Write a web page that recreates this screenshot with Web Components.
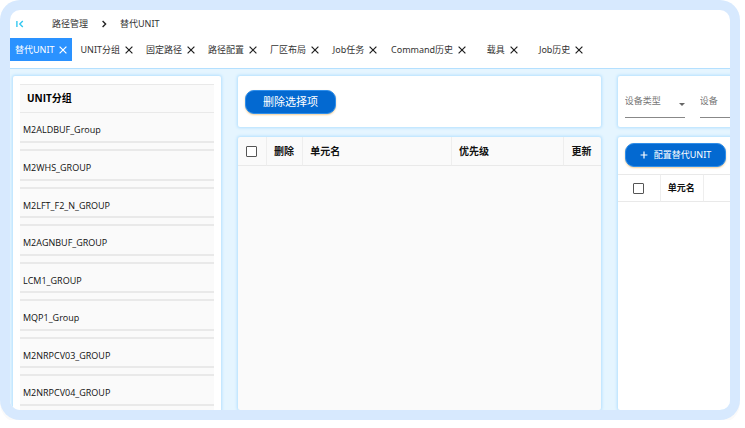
<!DOCTYPE html>
<html lang="zh-CN">
<head>
<meta charset="UTF-8">
<meta name="viewport" content="width=device-width, initial-scale=1">
<title>替代UNIT</title>
<style>
  :root {
    --blue: #0369d1;
    --tab-blue: #2a92ff;
    --glow: #b4e0ff;
    --line: #e9e9e9;
    --grey: #fafafa;
  }
  body {
    margin: 0 5px 8px 0;
    background: #fff;
    color: #333;
    font: 9px/12px "Noto Sans", "Noto Sans CJK SC", sans-serif;
  }
</style>
</head>
<body>
<unit-page></unit-page>

<script>
class CrumbBar extends HTMLElement {
  constructor() {
    super();
    this.attachShadow({ mode: "open" });
  }
  connectedCallback() {
    this.shadowRoot.innerHTML = `<style>
      :host {
        display: block;
        padding: 0 6px;
      }
      nav {
        display: flex;
        align-items: center;
        height: 28px;
      }
      a {
        color: #333;
        text-decoration: none;
      }
      button {
        display: flex;
        padding: 0;
        margin-right: 28px;
        border: 0;
        background: none;
      }
      .sep {
        margin: 0 12px;
      }
    </style>
    <nav aria-label="breadcrumb">
      <button type="button" aria-label="collapse menu">
        <svg width="8" height="8" viewBox="0 0 8 8" fill="none" stroke="#35c8f0" stroke-width="1.4">
          <path d="M.9 1v6M6.8 1 3.8 4l3 3" />
        </svg>
      </button>
      <a href="#">路径管理</a>
      <svg class="sep" width="8" height="8" viewBox="0 0 8 8" fill="none" stroke="#222" stroke-width="1.4">
        <path d="M2.6 1 5.6 4l-3 3" />
      </svg>
      <a href="#">替代UNIT</a>
    </nav>`;
  }
}
customElements.define("crumb-bar", CrumbBar);

class PageTab extends HTMLElement {
  constructor() {
    super();
    this.attachShadow({ mode: "open" });
  }
  connectedCallback() {
    this.shadowRoot.innerHTML = `<style>
      :host {
        display: flex;
        align-items: center;
        justify-content: center;
        gap: 5px;
        box-sizing: border-box;
        min-width: 56px;
        height: 23px;
        padding: 0 5px;
        color: #333;
        white-space: nowrap;
      }
      :host([active]) {
        background: var(--tab-blue);
        color: #fff;
      }
      a {
        color: inherit;
        text-decoration: none;
      }
      button {
        display: flex;
        padding: 0;
        border: 0;
        background: none;
        color: #222;
      }
      :host([active]) button {
        color: #fff;
      }
    </style>
    <a href="#"><slot></slot></a>
    <button type="button" aria-label="close">
      <svg width="8" height="8" viewBox="0 0 8 8" stroke="currentColor" stroke-width="1.2">
        <path d="M.6.6l6.8 6.8M7.4.6.6 7.4" />
      </svg>
    </button>`;
  }
}
customElements.define("page-tab", PageTab);

class PanelCard extends HTMLElement {
  constructor() {
    super();
    this.attachShadow({ mode: "open" });
  }
  connectedCallback() {
    this.shadowRoot.innerHTML = `<style>
      :host {
        display: block;
        box-sizing: border-box;
        background: #fff;
        border-radius: 2px;
        box-shadow: 0 0 3px 1px var(--glow);
      }
      :host([grow]) {
        flex: 1;
      }
      :host([grey]) {
        background: var(--grey);
      }
      :host([bar]) {
        display: flex;
        align-items: center;
        gap: 15px;
        height: 51px;
        padding: 0 7px;
      }
    </style>
    <slot></slot>`;
  }
}
customElements.define("panel-card", PanelCard);

class PillButton extends HTMLElement {
  constructor() {
    super();
    this.attachShadow({ mode: "open" });
  }
  connectedCallback() {
    const plus = this.hasAttribute("plus")
      ? `<svg width="8" height="8" viewBox="0 0 8 8" stroke="#fff" stroke-width="1.2"><path d="M4 .6v6.8M.6 4h6.8" /></svg>`
      : "";
    this.shadowRoot.innerHTML = `<style>
      :host {
        display: inline-flex;
      }
      button {
        display: flex;
        align-items: center;
        gap: 6px;
        height: 24px;
        padding: 0 17px;
        border: 1px solid #2f8eea;
        border-radius: 9px;
        background: var(--blue);
        color: #fff;
        font: inherit;
        white-space: nowrap;
        box-shadow: 0 1px 2px #f3cf98;
      }
      :host([plus]) button {
        padding: 0 14px;
      }
    </style>
    <button type="button">${plus}<slot></slot></button>`;
  }
}
customElements.define("pill-button", PillButton);

class GroupList extends HTMLElement {
  constructor() {
    super();
    this.attachShadow({ mode: "open" });
  }
  connectedCallback() {
    const items = this.getAttribute("items").split(",");
    this.shadowRoot.innerHTML = `<style>
      :host {
        display: block;
        margin: 8px 7px 0;
        background: var(--grey);
        color: #111;
        font-family: "Open Sans", "Noto Sans CJK SC", sans-serif;
      }
      h2 {
        margin: 0;
        padding: 0 7px;
        border-top: 1px solid var(--line);
        color: #000;
        font-size: 10px;
        line-height: 27px;
      }
      ul {
        display: grid;
        grid-auto-rows: 37px 38px;
        margin: 0;
        padding: 0;
        list-style: none;
      }
      li {
        display: flex;
        align-items: center;
        margin-bottom: 6px;
        padding: 6px 3px 0;
        border: solid var(--line);
        border-width: 2px 0;
      }
      li:first-child {
        border-top-width: 1px;
      }
    </style>
    <h2><slot></slot></h2>
    <ul>${items.map((item) => `<li>${item}</li>`).join("")}</ul>`;
  }
}
customElements.define("group-list", GroupList);

class SelectField extends HTMLElement {
  constructor() {
    super();
    this.attachShadow({ mode: "open" });
  }
  connectedCallback() {
    const label = this.getAttribute("label");
    this.shadowRoot.innerHTML = `<style>
      :host {
        display: flex;
        align-items: center;
        flex: 0 0 60px;
        height: 32px;
        border-bottom: 1px solid #888;
      }
      select {
        flex: 1;
        min-width: 0;
        padding: 0;
        border: 0;
        background: none;
        color: #777;
        font: inherit;
        appearance: none;
      }
      svg {
        margin-top: 7px;
      }
    </style>
    <select aria-label="${label}"><option>${label}</option></select>
    <svg width="6" height="3" viewBox="0 0 6 3" fill="#666"><path d="M0 0h6L3 3z" /></svg>`;
  }
}
customElements.define("select-field", SelectField);

class DataGrid extends HTMLElement {
  constructor() {
    super();
    this.attachShadow({ mode: "open" });
  }
  connectedCallback() {
    const cols = this.getAttribute("cols").split(",").map((col) => col.split(":"));
    this.shadowRoot.innerHTML = `<style>
      :host {
        display: block;
      }
      table {
        width: 100%;
        table-layout: fixed;
        border-collapse: separate;
        border-spacing: 0;
      }
      th {
        box-sizing: border-box;
        height: 29px;
        padding: 0 7px;
        border-right: 1px solid #eee;
        border-bottom: 1px solid var(--line);
        color: #111;
        text-align: left;
        white-space: nowrap;
      }
      th:first-child {
        padding: 0;
        text-align: center;
      }
      th:last-child {
        border-right: 0;
      }
      :host([small]) th {
        height: 28px;
        border-top: 1px solid var(--line);
      }
      input {
        display: block;
        width: 11px;
        height: 11px;
        margin: 0 auto;
        border: 1px solid #555;
        border-radius: 1px;
        background: #fff;
        appearance: none;
      }
    </style>
    <table>
      <thead>
        <tr>
          <th style="width: ${this.getAttribute("check")}"><input type="checkbox" aria-label="select all"></th>
          ${cols.map(([name, width]) => `<th style="width: ${width}">${name}</th>`).join("")}
        </tr>
      </thead>
    </table>`;
  }
}
customElements.define("data-grid", DataGrid);

class UnitPage extends HTMLElement {
  constructor() {
    super();
    this.attachShadow({ mode: "open" });
  }
  connectedCallback() {
    this.shadowRoot.innerHTML = `<style>
      :host {
        display: block;
        box-sizing: border-box;
        height: calc(100vh - 8px);
        padding: 10px;
        border-radius: 20px;
        background: #d7e9fe;
        box-shadow: 0 3px 0 #fafafa;
      }
      .window {
        display: flex;
        flex-direction: column;
        height: 100%;
        border-radius: 10px;
        background: #fff;
        overflow: hidden;
      }
      .tabs {
        display: flex;
        gap: 3px;
        padding-bottom: 7px;
        border-bottom: 1px solid var(--glow);
      }
      main {
        display: flex;
        flex: 1;
        gap: 17px;
        min-height: 0;
        padding: 7px 0 0 3px;
        background: #e5f5ff;
      }
      .col {
        display: flex;
        flex-direction: column;
        gap: 10px;
      }
      .groups {
        flex: 0 0 29%;
      }
      .units {
        flex: 0 0 50.6%;
        font-size: 10px;
      }
      .units pill-button {
        font-size: 11px;
      }
      .config {
        flex: 0 0 40%;
      }
      .action {
        padding: 6px 7px 7px;
      }
      .action pill-button {
        display: flex;
      }
    </style>
    <div class="window">
      <crumb-bar></crumb-bar>
      <div class="tabs">
        <page-tab active>替代UNIT</page-tab>
        <page-tab>UNIT分组</page-tab>
        <page-tab>固定路径</page-tab>
        <page-tab>路径配置</page-tab>
        <page-tab>厂区布局</page-tab>
        <page-tab>Job任务</page-tab>
        <page-tab>Command历史</page-tab>
        <page-tab>载具</page-tab>
        <page-tab>Job历史</page-tab>
      </div>
      <main>
        <div class="col groups">
          <panel-card grow>
            <group-list items="M2ALDBUF_Group,M2WHS_GROUP,M2LFT_F2_N_GROUP,M2AGNBUF_GROUP,LCM1_GROUP,MQP1_Group,M2NRPCV03_GROUP,M2NRPCV04_GROUP">UNIT分组</group-list>
          </panel-card>
        </div>
        <div class="col units">
          <panel-card bar><pill-button>删除选择项</pill-button></panel-card>
          <panel-card grow grey>
            <data-grid check="8%" cols="删除:10%,单元名:41%,优先级:31%,更新:10%"></data-grid>
          </panel-card>
        </div>
        <div class="col config">
          <panel-card bar>
            <select-field label="设备类型"></select-field>
            <select-field label="设备"></select-field>
          </panel-card>
          <panel-card grow>
            <div class="action"><pill-button plus>配置替代UNIT</pill-button></div>
            <data-grid small check="15%" cols="单元名:15%,:70%"></data-grid>
          </panel-card>
        </div>
      </main>
    </div>`;
  }
}
customElements.define("unit-page", UnitPage);
</script>
</body>
</html>
